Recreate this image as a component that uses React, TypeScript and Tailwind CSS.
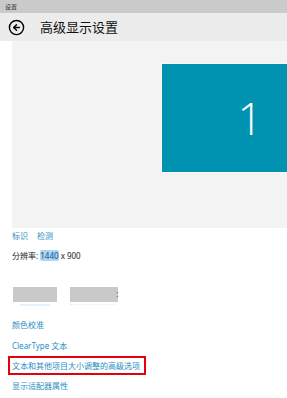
import { CircleArrowLeft } from "lucide-react";

function LinkRow({ children }: { children: React.ReactNode }) {
  return <div className="pl-[12px] text-[8px] leading-[12px] text-[#2a8ec4]">{children}</div>;
}

export default function App() {
  return (
    <div
      className="h-[398px] w-[287px] overflow-hidden bg-white"
      style={{ fontFamily: '"Noto Sans", "Noto Sans CJK SC", sans-serif' }}
    >
      {/* window caption */}
      <div className="flex h-[13px] items-center bg-[#cacaca] pl-[5px] text-[6px] leading-none text-[#333]">
        设置
      </div>

      {/* page header */}
      <div className="flex h-[28px] items-center bg-[#ececec]">
        <CircleArrowLeft size={17} strokeWidth={2} className="ml-[8px] text-black" />
        <span className="ml-[15px] text-[13px] leading-none text-[#111]">高级显示设置</span>
      </div>

      {/* monitor preview */}
      <div className="ml-[12px] h-[187px] overflow-hidden bg-[#f3f3f3] pt-[23px] pl-[150px]">
        <div className="flex h-[108px] w-[176px] items-center justify-center bg-[#0093b1] outline outline-1 outline-[#f9f9f9]">
          <span
            className="text-[44px] font-light leading-none text-white"
            style={{ fontFamily: '"Open Sans", sans-serif' }}
          >
            1
          </span>
        </div>
      </div>

      <div className="mt-[2px] flex gap-[9px] pl-[12px] text-[8px] leading-[12px] text-[#2a8ec4]">
        <span>标识</span>
        <span>检测</span>
      </div>

      <div className="mt-[8px] pl-[12px] text-[8px] leading-[12px] text-[#222]">
        分辨率:{" "}
        <span className="rounded-[2px] bg-[#a9d6f3] text-[#1a4d86]">1440</span> x 900
      </div>

      <div className="mt-[25px] flex items-start pl-[13px]">
        <div className="flex flex-col items-center">
          <div className="h-[15px] w-[44px] bg-[#c9c9c9]" />
          <div className="mt-[2px] h-[2px] w-[30px] bg-[#e4f1fa]" />
        </div>
        <div className="ml-[13px] flex flex-col">
          <div className="h-[15px] w-[48px] bg-[#c9c9c9]" />
          <div className="mt-[2px] h-[1px] w-[46px] border-t border-dotted border-[#ececec]" />
        </div>
        <span className="ml-[-2px] mt-[2px] text-[8px] leading-[10px] text-[#555]">ː</span>
      </div>

      <div className="mt-[13px]">
        <LinkRow>颜色校准</LinkRow>
      </div>
      <div className="mt-[9px]">
        <LinkRow>ClearType 文本</LinkRow>
      </div>
      <div className="mt-[4px] ml-[8px] flex h-[19px] w-[138px] items-center border-2 border-[#e5000d] pl-[2px] text-[8px] leading-[12px] text-[#2a8ec4]">
        文本和其他项目大小调整的高级选项
      </div>
      <div className="mt-[5px]">
        <LinkRow>显示适配器属性</LinkRow>
      </div>
    </div>
  );
}
